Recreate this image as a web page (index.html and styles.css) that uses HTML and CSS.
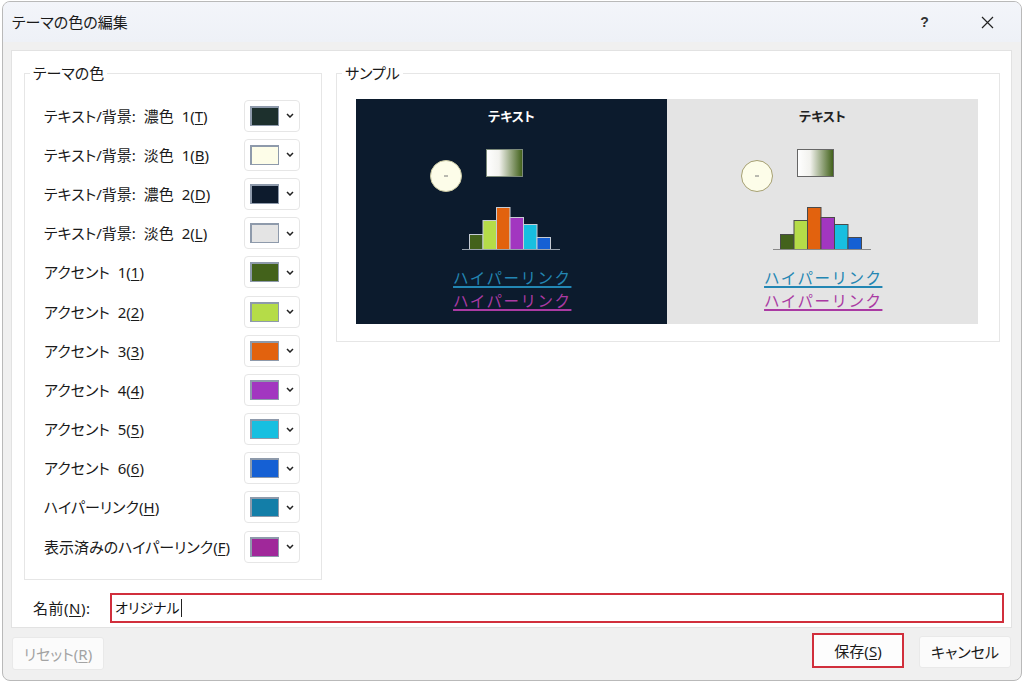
FILE: index.html
```html
<!DOCTYPE html>
<html lang="ja">
<head>
<meta charset="utf-8">
<title>テーマの色の編集</title>
<link rel="stylesheet" href="styles.css">
</head>
<body>
<div class="window">
  <div class="titlebar">
    <span class="title">テーマの色の編集</span>
    <span class="tb-btn help">?</span>
    <span class="tb-btn close"><svg width="13" height="13" viewBox="0 0 13 13"><path d="M1 1 L12 12 M12 1 L1 12" stroke="#222" stroke-width="1.2" fill="none"/></svg></span>
  </div>
  <div class="panel">
    <div class="groups">
      <fieldset class="group colors">
        <legend>テーマの色</legend>
        <div class="group-body rows">
          <div class="row"><span class="label">テキスト/背景: 濃色 1(<u>T</u>)</span><span class="picker"><span class="swatch c1"></span><svg class="chev" width="8" height="5" viewBox="0 0 8 5"><path d="M1 1 L4 4 L7 1" stroke="#222" stroke-width="1.5" fill="none"/></svg></span></div>
          <div class="row"><span class="label">テキスト/背景: 淡色 1(<u>B</u>)</span><span class="picker"><span class="swatch c2"></span><svg class="chev" width="8" height="5" viewBox="0 0 8 5"><path d="M1 1 L4 4 L7 1" stroke="#222" stroke-width="1.5" fill="none"/></svg></span></div>
          <div class="row"><span class="label">テキスト/背景: 濃色 2(<u>D</u>)</span><span class="picker"><span class="swatch c3"></span><svg class="chev" width="8" height="5" viewBox="0 0 8 5"><path d="M1 1 L4 4 L7 1" stroke="#222" stroke-width="1.5" fill="none"/></svg></span></div>
          <div class="row"><span class="label">テキスト/背景: 淡色 2(<u>L</u>)</span><span class="picker"><span class="swatch c4"></span><svg class="chev" width="8" height="5" viewBox="0 0 8 5"><path d="M1 1 L4 4 L7 1" stroke="#222" stroke-width="1.5" fill="none"/></svg></span></div>
          <div class="row"><span class="label">アクセント 1(<u>1</u>)</span><span class="picker"><span class="swatch c5"></span><svg class="chev" width="8" height="5" viewBox="0 0 8 5"><path d="M1 1 L4 4 L7 1" stroke="#222" stroke-width="1.5" fill="none"/></svg></span></div>
          <div class="row"><span class="label">アクセント 2(<u>2</u>)</span><span class="picker"><span class="swatch c6"></span><svg class="chev" width="8" height="5" viewBox="0 0 8 5"><path d="M1 1 L4 4 L7 1" stroke="#222" stroke-width="1.5" fill="none"/></svg></span></div>
          <div class="row"><span class="label">アクセント 3(<u>3</u>)</span><span class="picker"><span class="swatch c7"></span><svg class="chev" width="8" height="5" viewBox="0 0 8 5"><path d="M1 1 L4 4 L7 1" stroke="#222" stroke-width="1.5" fill="none"/></svg></span></div>
          <div class="row"><span class="label">アクセント 4(<u>4</u>)</span><span class="picker"><span class="swatch c8"></span><svg class="chev" width="8" height="5" viewBox="0 0 8 5"><path d="M1 1 L4 4 L7 1" stroke="#222" stroke-width="1.5" fill="none"/></svg></span></div>
          <div class="row"><span class="label">アクセント 5(<u>5</u>)</span><span class="picker"><span class="swatch c9"></span><svg class="chev" width="8" height="5" viewBox="0 0 8 5"><path d="M1 1 L4 4 L7 1" stroke="#222" stroke-width="1.5" fill="none"/></svg></span></div>
          <div class="row"><span class="label">アクセント 6(<u>6</u>)</span><span class="picker"><span class="swatch c10"></span><svg class="chev" width="8" height="5" viewBox="0 0 8 5"><path d="M1 1 L4 4 L7 1" stroke="#222" stroke-width="1.5" fill="none"/></svg></span></div>
          <div class="row"><span class="label">ハイパーリンク(<u>H</u>)</span><span class="picker"><span class="swatch c11"></span><svg class="chev" width="8" height="5" viewBox="0 0 8 5"><path d="M1 1 L4 4 L7 1" stroke="#222" stroke-width="1.5" fill="none"/></svg></span></div>
          <div class="row"><span class="label">表示済みのハイパーリンク(<u>F</u>)</span><span class="picker"><span class="swatch c12"></span><svg class="chev" width="8" height="5" viewBox="0 0 8 5"><path d="M1 1 L4 4 L7 1" stroke="#222" stroke-width="1.5" fill="none"/></svg></span></div>
        </div>
      </fieldset>
      <fieldset class="group sample">
        <legend>サンプル</legend>
        <div class="group-body previews">
          <div class="preview dark">
            <div class="ptitle">テキスト</div>
            <svg class="art" width="311" height="130" viewBox="0 0 311 130">
              <defs>
                <linearGradient id="g1" x1="0" y1="0" x2="1" y2="0">
                  <stop offset="0" stop-color="#ffffff"/>
                  <stop offset="0.35" stop-color="#f2f2ee"/>
                  <stop offset="1" stop-color="#3f5f17"/>
                </linearGradient>
              </defs>
              <circle cx="90" cy="51" r="15.5" fill="#fdfde9" stroke="#c9c8a2" stroke-width="1"/>
              <line x1="88" y1="51" x2="92" y2="51" stroke="#777" stroke-width="1"/>
              <rect x="130.5" y="24.5" width="36" height="27" fill="url(#g1)" stroke="#7c8a7a" stroke-width="1"/>
              <g stroke="#c6ccd4" stroke-width="1">
                <rect x="113.5" y="109.5" width="13.5" height="15" fill="#43621b"/>
                <rect x="127" y="95.5" width="13.5" height="29" fill="#b5dc48"/>
                <rect x="140.5" y="82.5" width="13.5" height="42" fill="#e2620e"/>
                <rect x="154" y="92.5" width="13.5" height="32" fill="#a236c0"/>
                <rect x="167.5" y="99.5" width="13.5" height="25" fill="#17bfe0"/>
                <rect x="181" y="112.5" width="13.5" height="12" fill="#1560d4"/>
              </g>
              <line x1="106" y1="124.5" x2="204" y2="124.5" stroke="#9aa3ad" stroke-width="1.2"/>
            </svg>
            <div class="plink link">ハイパーリンク</div>
            <div class="plink visited">ハイパーリンク</div>
          </div>
          <div class="preview light">
            <div class="ptitle">テキスト</div>
            <svg class="art" width="311" height="130" viewBox="0 0 311 130">
              <defs>
                <linearGradient id="g2" x1="0" y1="0" x2="1" y2="0">
                  <stop offset="0" stop-color="#ffffff"/>
                  <stop offset="0.35" stop-color="#f2f2ee"/>
                  <stop offset="1" stop-color="#3f5f17"/>
                </linearGradient>
              </defs>
              <circle cx="90" cy="51" r="15.5" fill="#fdfde9" stroke="#a59f72" stroke-width="1"/>
              <line x1="88" y1="51" x2="92" y2="51" stroke="#777" stroke-width="1"/>
              <rect x="130.5" y="24.5" width="36" height="27" fill="url(#g2)" stroke="#666" stroke-width="1"/>
              <g stroke="#4a4a4a" stroke-width="1">
                <rect x="113.5" y="109.5" width="13.5" height="15" fill="#43621b"/>
                <rect x="127" y="95.5" width="13.5" height="29" fill="#b5dc48"/>
                <rect x="140.5" y="82.5" width="13.5" height="42" fill="#e2620e"/>
                <rect x="154" y="92.5" width="13.5" height="32" fill="#a236c0"/>
                <rect x="167.5" y="99.5" width="13.5" height="25" fill="#17bfe0"/>
                <rect x="181" y="112.5" width="13.5" height="12" fill="#1560d4"/>
              </g>
              <line x1="106" y1="124.5" x2="204" y2="124.5" stroke="#888" stroke-width="1.2"/>
            </svg>
            <div class="plink link">ハイパーリンク</div>
            <div class="plink visited">ハイパーリンク</div>
          </div>
        </div>
      </fieldset>
    </div>
    <div class="name-row">
      <span class="name-label">名前(<u>N</u>):</span>
      <div class="name-input"><span class="name-text">オリジナル</span><span class="caret"></span></div>
    </div>
  </div>
  <div class="footer">
    <div class="btn disabled">リセット(<u>R</u>)</div>
    <div class="spacer"></div>
    <div class="btn save">保存(<u>S</u>)</div>
    <div class="btn cancel">キャンセル</div>
  </div>
</div>
</body>
</html>
```
FILE: styles.css
```css
* { box-sizing: border-box; }
html, body { margin: 0; padding: 0; background: #ffffff; }
body {
  font-family: "Noto Sans", "Noto Sans CJK JP", sans-serif;
  font-feature-settings: "palt";
  font-size: 15px;
  color: #1b1b1b;
}
u { text-underline-offset: 2px; }

.window {
  margin: 1px 0 0 2px;
  width: 1020px;
  height: 680px;
  border: 1px solid #b9b9b9;
  border-radius: 8px;
  background: #f0f0f0;
  display: flex;
  flex-direction: column;
  overflow: hidden;
}

.titlebar {
  flex: none;
  height: 40px;
  display: flex;
  align-items: center;
  padding: 0 2px 0 9px;
  background: linear-gradient(#f3f5fa, #eef1f7);
}
.title { flex: 1; font-size: 15px; line-height: 20px; color: #1a1a1a; }
.tb-btn {
  width: 63px;
  height: 40px;
  display: flex;
  align-items: center;
  justify-content: center;
}
.help { font-size: 14px; font-weight: 700; color: #333; font-family: "Liberation Sans", sans-serif; }

.panel {
  flex: none;
  margin: 8px 9px 0 8px;
  height: 578px;
  background: #ffffff;
  border: 1px solid #e2e2e2;
  display: flex;
  flex-direction: column;
  padding-bottom: 4px;
}

.groups {
  display: flex;
  align-items: flex-start;
  gap: 14px;
  padding: 12px 11px 0 12px;
}
.group {
  margin: 0;
  padding: 0;
  border: 1px solid #e6e6e6;
  min-width: 0;
}
.group legend {
  margin-left: 5px;
  padding: 0 3px;
  font-size: 15px;
  line-height: 20px;
  color: #1a1a1a;
}
.colors { width: 298px; flex: none; }
.sample { width: 664px; flex: none; }

.rows {
  display: grid;
  grid-template-columns: 1fr 56px;
  grid-auto-rows: 39.2px;
  padding: 13px 21px 13px 19px;
}
.row { display: contents; }
.label {
  align-self: center;
  font-size: 15px;
  line-height: 20px;
  white-space: nowrap;
  color: #1a1a1a;
  word-spacing: 4px;
}
.picker {
  align-self: center;
  height: 32px;
  width: 56px;
  border: 1px solid #e6e6e6;
  border-radius: 4px;
  background: #ffffff;
  display: flex;
  align-items: center;
  padding-left: 5px;
}
.swatch {
  width: 29px;
  height: 20px;
  border-style: solid;
  border-color: #8e9aab;
  border-width: 2px 1px 1px 2px;
}
.chev { margin-left: 7px; }

.c1 { background: #1d302d; }
.c2 { background: #fdfde8; }
.c3 { background: #0d1b2d; }
.c4 { background: #e4e4e4; }
.c5 { background: #43621b; }
.c6 { background: #b5dc48; }
.c7 { background: #e2620e; }
.c8 { background: #a236c0; }
.c9 { background: #17bfe0; }
.c10 { background: #1560d4; }
.c11 { background: #137ea8; }
.c12 { background: #a0289a; }

.previews {
  display: flex;
  padding: 16px 20px 17px 19px;
}
.preview {
  width: 311px;
  height: 225px;
  display: flex;
  flex-direction: column;
  align-items: center;
}
.dark { background: #0c1b2d; }
.light { background: #e4e4e4; }
.ptitle {
  margin-top: 8px;
  font-size: 13px;
  line-height: 18px;
  font-weight: 700;
}
.dark .ptitle { color: #ffffff; }
.light .ptitle { color: #222222; }
.art { display: block; flex: none; }
.plink {
  font-family: "Noto Sans CJK JP", sans-serif;
  font-feature-settings: normal;
  font-size: 15.5px;
  letter-spacing: 1.5px;
  text-indent: 1.5px;
  line-height: 22.5px;
  text-decoration: underline;
  text-decoration-thickness: 2px;
  text-underline-offset: 2px;
}
.plink.link { margin-top: 11px; color: #2386b3; }
.plink.visited { color: #aa3aa3; }

.name-row {
  margin-top: auto;
  display: flex;
  align-items: center;
  height: 30px;
  padding: 0 7px 0 21px;
}
.name-label { width: 77px; flex: none; font-size: 15px; line-height: 20px; color: #1a1a1a; letter-spacing: 0.5px; }
.name-input {
  flex: 1;
  height: 30px;
  border: 2px solid #d12f3c;
  background: #ffffff;
  display: flex;
  align-items: center;
  padding-left: 3px;
}
.name-text { font-size: 14px; line-height: 20px; color: #111; }
.caret { width: 1px; height: 18px; background: #222; margin-left: 1px; }

.footer {
  flex: 1;
  display: flex;
  align-items: flex-end;
  padding: 0 10px 12px 9px;
}
.spacer { flex: 1; }
.btn {
  width: 92px;
  height: 32px;
  display: flex;
  align-items: center;
  justify-content: center;
  font-size: 15px;
  line-height: 20px;
  border-radius: 3px;
  background: #fbfbfb;
  border: 1px solid #e9e9e9;
  color: #1a1a1a;
}
.disabled { color: #a3a3a3; height: 33px; margin-bottom: -2px; }
.save {
  height: 35px;
  border: 2px solid #d12f3c;
  border-radius: 0;
  margin-right: 15px;
  background: #fdfdfd;
}
```
